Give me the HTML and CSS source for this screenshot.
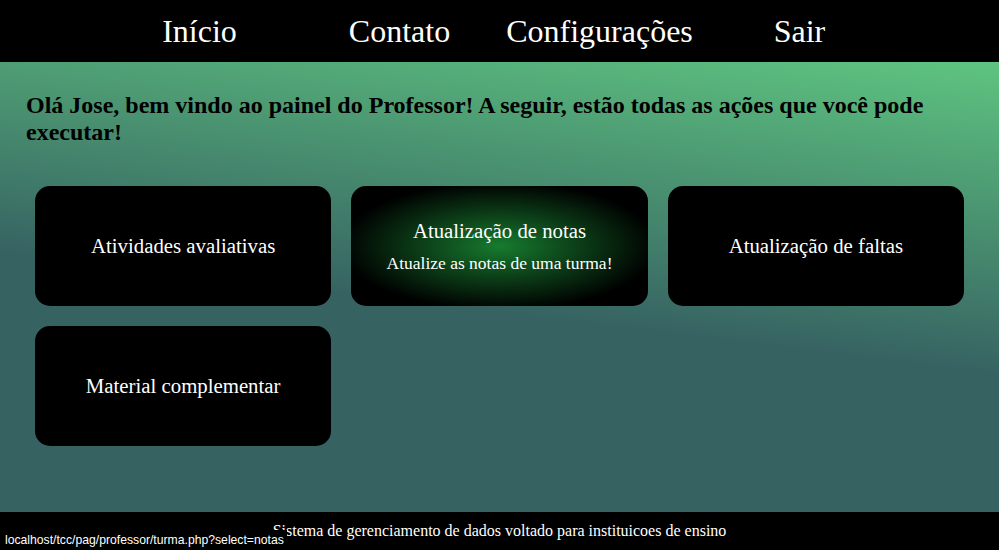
FILE: index.html
```html
<!DOCTYPE html>
<html lang="pt-BR">
<head>
<meta charset="utf-8">
<title>Painel do Professor</title>
<link rel="stylesheet" href="styles.css">
</head>
<body>
<header class="topbar">
  <nav class="nav">
    <a class="nav-link" href="#">Início</a>
    <a class="nav-link" href="#">Contato</a>
    <a class="nav-link" href="#">Configurações</a>
    <a class="nav-link" href="#">Sair</a>
  </nav>
</header>
<main class="main">
  <h2 class="greeting">Olá Jose, bem vindo ao painel do Professor! A seguir, estão todas as ações que você pode executar!</h2>
  <section class="grid">
    <a class="card" href="#"><span class="card-title">Atividades avaliativas</span></a>
    <a class="card card-active" href="#"><span class="card-title">Atualização de notas</span><span class="card-sub">Atualize as notas de uma turma!</span></a>
    <a class="card" href="#"><span class="card-title">Atualização de faltas</span></a>
    <a class="card" href="#"><span class="card-title">Material complementar</span></a>
  </section>
</main>
<footer class="footer">
  <p class="footer-text">Sistema de gerenciamento de dados voltado para instituicoes de ensino</p>
</footer>
<div class="status">localhost/tcc/pag/professor/turma.php?select=notas</div>
</body>
</html>
```

FILE: styles.css
```css
html, body {
  margin: 0;
  height: 100%;
}

body {
  display: flex;
  flex-direction: column;
  min-height: 100vh;
  font-family: "Liberation Serif", "Times New Roman", serif;
  color: #000;
}

.topbar {
  background: #000;
  height: 62px;
  flex: 0 0 62px;
  display: flex;
  justify-content: center;
  align-items: center;
}

.nav {
  display: grid;
  grid-template-columns: repeat(4, 200px);
}

.nav-link {
  color: #fff;
  text-decoration: none;
  text-align: center;
  font-size: 32px;
  line-height: 37px;
}

.main {
  flex: 1;
  background: linear-gradient(7deg, #366262 45%, #5ec480 100%);
  padding: 30px 26px 0;
}

.greeting {
  margin: 0;
  font-size: 24px;
  font-weight: bold;
  line-height: 26.5px;
}

.grid {
  display: grid;
  grid-template-columns: repeat(3, 1fr);
  gap: 20px;
  margin: 41px 9px 0;
}

.card {
  height: 120px;
  border-radius: 15px;
  background: #000;
  color: #fff;
  text-decoration: none;
  display: flex;
  flex-direction: column;
  align-items: center;
  justify-content: center;
  text-align: center;
}

.card-active {
  background: radial-gradient(ellipse at center, #177b2f 0%, #000 76%);
}

.card-title {
  font-size: 20.8px;
  line-height: 23.9px;
}

.card-sub {
  font-size: 17.5px;
  line-height: 20.1px;
  margin-top: 10.7px;
}

.footer {
  flex: 0 0 38px;
  height: 38px;
  background: #000;
  display: flex;
  align-items: center;
  justify-content: center;
}

.footer-text {
  margin: 0;
  color: #fff;
  font-size: 16px;
  line-height: 18.4px;
}

.status {
  position: fixed;
  left: 0;
  bottom: 0;
  height: 20px;
  line-height: 20px;
  padding: 0 3px 0 5px;
  background: #000;
  color: #fff;
  font-family: "Liberation Sans", Arial, sans-serif;
  font-size: 12.2px;
}
```
